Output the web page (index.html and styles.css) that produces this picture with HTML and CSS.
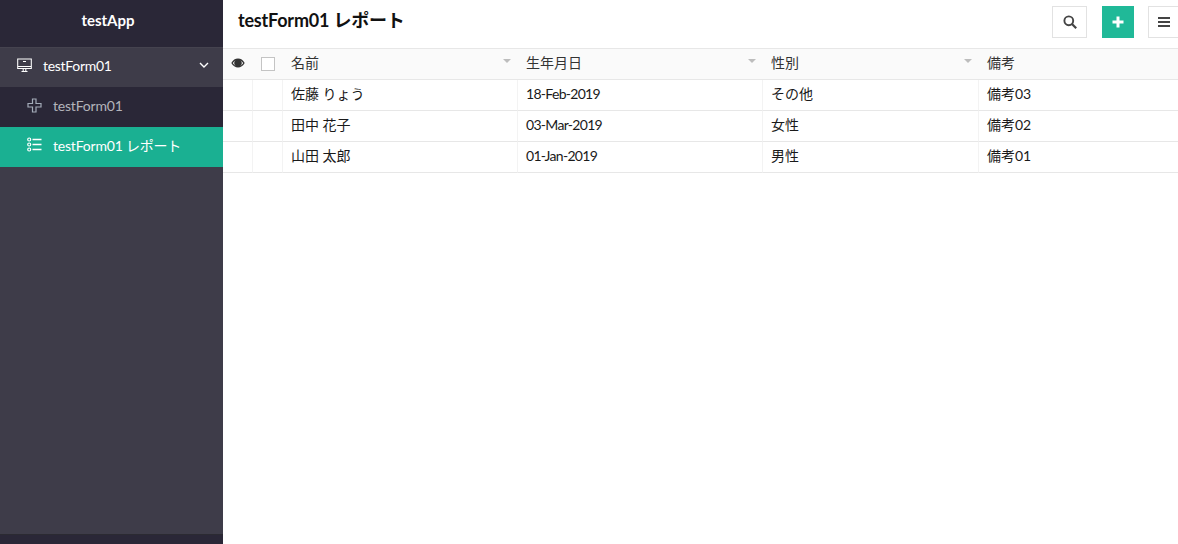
FILE: index.html
```html
<!DOCTYPE html>
<html lang="ja">
<head>
<meta charset="utf-8">
<title>testForm01 レポート</title>
<link rel="stylesheet" href="styles.css">
</head>
<body>
<div class="app">
  <aside class="sidebar">
    <div class="brand">testApp</div>
    <nav class="nav">
      <div class="nav-group">
        <svg class="icon" viewBox="0 0 15 15" width="15" height="15"><path d="M0.700 1h13.600v9.500H0.700zM0.700 8.500h13.600M4.500 13.500h6M6.200 10.500v3M8.800 10.500v3M6 3.500h3" fill="none" stroke="currentColor" stroke-width="1.050"/></svg>
        <span class="nav-label">testForm01</span>
        <svg class="chevron" viewBox="0 0 10 6" width="10" height="6"><path d="M1 1l4 4 4-4" fill="none" stroke="currentColor" stroke-width="1.400"/></svg>
      </div>
      <a class="nav-item">
        <svg class="icon" viewBox="0 0 15 15" width="15" height="15"><path d="M5.500 1h3.500v4.500H14V9H9v5H5.500V9H1V5.500h4.500z" fill="none" stroke="currentColor" stroke-width="1.200"/></svg>
        <span>testForm01</span>
      </a>
      <a class="nav-item active">
        <svg class="icon" viewBox="0 0 15 15" width="15" height="15"><path d="M5.500 2.500H14.500M5.500 7.500H14.500M5.500 12.500H14.500" fill="none" stroke="currentColor" stroke-width="1.500"/><circle cx="2.200" cy="2.500" r="1.500" fill="none" stroke="currentColor" stroke-width="1.200"/><circle cx="2.200" cy="7.500" r="1.500" fill="none" stroke="currentColor" stroke-width="1.200"/><circle cx="2.200" cy="12.500" r="1.500" fill="none" stroke="currentColor" stroke-width="1.200"/></svg>
        <span>testForm01 レポート</span>
      </a>
    </nav>
    <div class="side-foot"></div>
  </aside>
  <main class="main">
    <header class="topbar">
      <h1 class="title">testForm01 レポート</h1>
      <div class="actions">
        <button class="btn btn-search"><svg viewBox="0 0 14 14" width="14" height="14"><circle cx="5.800" cy="5.800" r="4.400" fill="none" stroke="currentColor" stroke-width="1.900"/><path d="M9 9l4.200 4.200" stroke="currentColor" stroke-width="2.200"/></svg></button>
        <button class="btn btn-add"><svg viewBox="0 0 12 12" width="12" height="12"><path d="M6 0.500v11M0.500 6h11" stroke="currentColor" stroke-width="3"/></svg></button>
        <button class="btn btn-menu"><svg viewBox="0 0 12 10" width="12" height="10"><path d="M0 1h12M0 5h12M0 9h12" stroke="currentColor" stroke-width="1.800"/></svg></button>
      </div>
    </header>
    <table class="grid">
      <colgroup>
        <col class="c-eye"><col class="c-check"><col class="c-name"><col class="c-date"><col class="c-sex"><col class="c-note">
      </colgroup>
      <thead>
        <tr>
          <th class="center"><svg class="eye" viewBox="0 0 14 10" width="14" height="10"><path d="M0.300 5C2 2 4.300 0.600 7 0.600S12 2 13.700 5C12 8 9.700 9.400 7 9.400S2 8 0.300 5z" fill="#333"/><path d="M1.800 5C3.300 3 4 2.600 4.500 2.400A3.200 3.200 0 0 0 4.500 7.600C4 7.400 3.300 7 1.800 5zM12.200 5C10.700 3 10 2.600 9.500 2.400A3.200 3.200 0 0 1 9.500 7.600C10 7.400 10.700 7 12.200 5z" fill="#fff"/></svg></th>
          <th class="center"><span class="check"></span></th>
          <th><div class="th-in">名前<i class="sort"></i></div></th>
          <th><div class="th-in">生年月日<i class="sort"></i></div></th>
          <th><div class="th-in">性別<i class="sort"></i></div></th>
          <th><div class="th-in">備考</div></th>
        </tr>
      </thead>
      <tbody>
        <tr><td></td><td></td><td>佐藤 りょう</td><td class="date">18-Feb-2019</td><td>その他</td><td>備考03</td></tr>
        <tr><td></td><td></td><td>田中 花子</td><td class="date">03-Mar-2019</td><td>女性</td><td>備考02</td></tr>
        <tr><td></td><td></td><td>山田 太郎</td><td class="date">01-Jan-2019</td><td>男性</td><td>備考01</td></tr>
      </tbody>
    </table>
  </main>
</div>
</body>
</html>
```
FILE: styles.css
```css
* { box-sizing: border-box; }
html, body { margin: 0; height: 100%; overflow: hidden; }
body {
  font-family: "Lato", "Noto Sans CJK JP", sans-serif;
  font-size: 14px;
  color: #222;
  background: #fff;
}
.app { display: flex; height: 544px; }
.sidebar {
  width: 223px;
  flex: none;
  display: flex;
  flex-direction: column;
  background: #3e3c49;
  color: #fff;
}
.brand {
  height: 47px;
  background: #2a2737;
  display: flex;
  align-items: center;
  justify-content: center;
  padding: 0 7px 7px 0;
  font-size: 15px;
  font-weight: 700;
}
.nav { flex: 1; }
.nav-group {
  height: 40px;
  display: flex;
  align-items: center;
  padding: 0 14px 5px 17px;
  background: #3e3c49;
  border-top: 1px solid #45434f;
  font-size: 14px;
  font-weight: 400;
  letter-spacing: -0.3px;
}
.nav-group .icon { margin-right: 11px; }
.nav-label { flex: 1; }
.nav-item {
  height: 40px;
  display: flex;
  align-items: center;
  padding: 0 0 3px 27px;
  background: #2a2737;
  color: #b4b4bb;
  font-size: 14px;
  letter-spacing: -0.2px;
}
.nav-item .icon { margin-right: 11px; color: #a3abb8; }
.nav-item.active { padding-bottom: 5px; background: #1ab092; color: #fff; }
.nav-item.active .icon { color: #fff; }
.side-foot {
  height: 10px;
  background: #2a2737;
  border-top: 1px solid #2b2a32;
}
.main { flex: 1; min-width: 0; overflow: hidden; }
.topbar {
  height: 49px;
  display: flex;
  align-items: flex-start;
  justify-content: space-between;
  padding-left: 15px;
  border-bottom: 1px solid #e7e7e7;
}
.title {
  margin: 8px 0 0;
  font-size: 18px;
  line-height: 24px;
  font-weight: 700;
  letter-spacing: -0.2px;
  color: #111;
}
.actions {
  display: flex;
  gap: 15px;
  padding-top: 6px;
  margin-right: -8px;
}
.btn {
  width: 35px;
  height: 32px;
  padding: 0;
  display: flex;
  align-items: center;
  justify-content: center;
  background: #fff;
  border: 1px solid #e2e2e2;
  color: #444;
}
.btn-add { width: 32px; background: #20b998; border-color: #20b998; color: #fff; }
.btn-menu { width: 38px; margin-left: -1px; padding-right: 6px; }
.grid {
  width: 955px;
  table-layout: fixed;
  border-collapse: separate;
  border-spacing: 0;
}
.c-eye { width: 30px; }
.c-check { width: 30px; }
.c-name { width: 235px; }
.c-date { width: 245px; }
.c-sex { width: 216px; }
.c-note { width: 199px; }
th {
  height: 31px;
  padding: 0 8px 4px;
  background: #fafafa;
  border-bottom: 1px solid #e7e7e7;
  font-weight: 400;
  text-align: left;
  color: #333;
}
.center { text-align: center; padding: 0 0 3px; }
.th-in { display: flex; justify-content: space-between; align-items: center; }
.eye { display: block; margin: 0 auto; }
.check {
  display: block;
  width: 14px;
  height: 14px;
  margin: 3px auto 0;
  background: #fff;
  border: 1px solid #c4c4c4;
}
.sort {
  width: 0;
  height: 0;
  margin: -2px -1px 0 0;
  border-left: 4px solid transparent;
  border-right: 4px solid transparent;
  border-top: 4px solid #bdbdbd;
}
td {
  height: 31px;
  padding: 0 8px 4px;
  border-bottom: 1px solid #e7e7e7;
  border-right: 1px solid #f3f3f3;
  color: #1a1a1a;
  white-space: nowrap;
}
td:last-child { border-right: 0; }
.date { letter-spacing: -0.7px; }
```
